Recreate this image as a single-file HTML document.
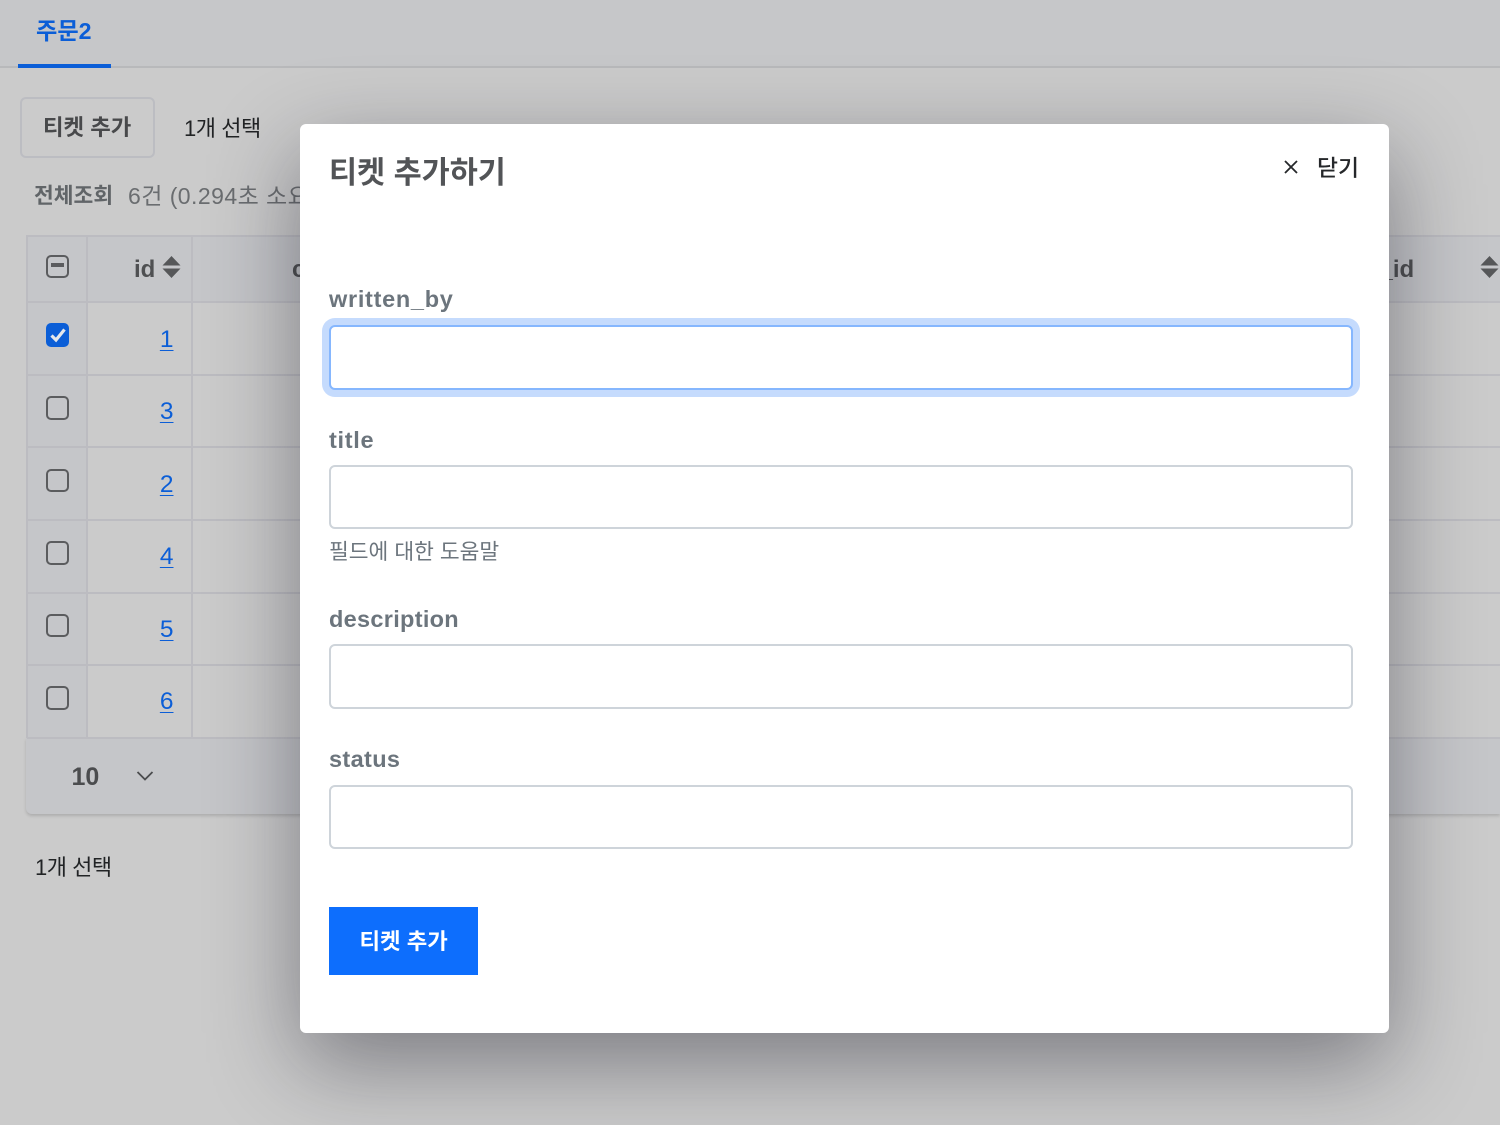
<!DOCTYPE html>
<html lang="ko"><head><meta charset="utf-8"><title>티켓 추가</title>
<style>
*{box-sizing:border-box}
html,body{margin:0;padding:0}
body{width:1500px;height:1125px;overflow:hidden;position:relative;background:#cbcbcb;font-family:"Liberation Sans","Noto Sans CJK KR",sans-serif;color:#212529}
.t{position:absolute;white-space:nowrap;line-height:1}
.r{position:absolute}
.hl{position:absolute;left:27px;width:1473px;height:2px;background:#bcbcc1}
.vl{position:absolute;width:2px;background:#bcbcc1}
.cb{position:absolute;left:45.500px;width:23.500px;height:23.500px;border:2px solid #5b5c5e;border-radius:5px}
.lk{position:absolute;right:1326.500px;font-size:24.500px;line-height:1;color:#0b5ed7;text-decoration:underline;text-underline-offset:3px;text-decoration-thickness:1px}
.lb{position:absolute;left:329px;font-size:23.500px;font-weight:700;color:#6c757d;line-height:1;white-space:nowrap}
.in{position:absolute;left:329px;width:1024px;height:65px;background:#fff;border:2px solid #ced4da;border-radius:6px}
</style></head><body>
<div class="r" style="left:0;top:0;width:1500px;height:68px;background:#c6c7c9;border-bottom:2px solid #b8b9bb"></div>
<div class="r" style="left:18px;top:64px;width:93px;height:4px;background:#0b5ed7"></div>
<div class="t" style="left:36px;top:20px;font-size:23.200px;font-weight:700;color:#0b5ed7">주문2</div>

<div class="r" style="left:20px;top:97px;width:135px;height:61px;border:2px solid #bcbdc2;border-radius:6px"></div>
<div class="t" style="left:43px;top:117px;font-size:22.300px;font-weight:700;color:#48494b">티켓 추가</div>
<div class="t" style="left:184px;top:118px;font-size:22px;letter-spacing:-.45px;color:#212325">1개 선택</div>
<div class="t" style="left:34px;top:186px;font-size:21.500px;font-weight:700;color:#616568">전체조회</div>
<div class="t" style="left:128px;top:185px;font-size:23px;letter-spacing:.45px;color:#6a6d70">6건 (0.294초 소요)</div>

<div class="r" style="left:27px;top:236px;width:1473px;height:66px;background:#c5c6c9"></div>
<div class="r" style="left:27px;top:302px;width:60px;height:436px;background:#c5c6c9"></div>
<div class="r" style="left:26px;top:738px;width:1474px;height:76px;background:#c5c6c9;border-radius:0 0 0 6px;box-shadow:0 2px 3px rgba(0,0,0,.15)"></div>
<div class="hl" style="top:235px"></div><div class="hl" style="top:301px"></div><div class="hl" style="top:374px"></div><div class="hl" style="top:446px"></div><div class="hl" style="top:519px"></div><div class="hl" style="top:592px"></div><div class="hl" style="top:664px"></div><div class="hl" style="top:737px"></div>
<div class="vl" style="left:25.500px;top:235px;height:503px"></div>
<div class="vl" style="left:86px;top:236px;height:502px"></div>
<div class="vl" style="left:191px;top:236px;height:502px"></div>

<div class="cb" style="top:254.500px"><div class="r" style="left:3px;top:6.500px;width:13.500px;height:3.500px;background:#5b5c5e"></div></div>
<div class="cb" style="top:323px;background:#0b5ed7;border-color:#0b5ed7"><svg class="r" style="left:0;top:0" width="20" height="20" viewBox="0 0 20 20"><path d="M3.500 10.500l4.500 4.500 8.500-10.500" fill="none" stroke="#e4e7eb" stroke-width="3.200"/></svg></div>
<div class="cb" style="top:396px"></div><div class="cb" style="top:468.500px"></div><div class="cb" style="top:541px"></div><div class="cb" style="top:613.500px"></div><div class="cb" style="top:686px"></div>

<div class="t" style="left:134px;top:258px;font-size:24px;font-weight:700;color:#4f5052">id</div>
<svg class="r" style="left:162px;top:256px" width="19" height="22" viewBox="0 0 19 22"><path d="M9.500 0L18.500 9.500H.5zM.5 12.500H18.500L9.500 22z" fill="#565759"/></svg>
<div class="t" style="left:292px;top:258px;font-size:24px;font-weight:700;color:#4f5052">c</div>
<div class="t" style="left:1379.500px;top:258px;font-size:24px;font-weight:700;color:#4f5052">_id</div>
<svg class="r" style="left:1479.500px;top:256px" width="19" height="22" viewBox="0 0 19 22"><path d="M9.500 0L18.500 9.500H.5zM.5 12.500H18.500L9.500 22z" fill="#565759"/></svg>

<div class="lk" style="top:327.500px">1</div><div class="lk" style="top:400px">3</div><div class="lk" style="top:472.500px">2</div><div class="lk" style="top:545px">4</div><div class="lk" style="top:617.500px">5</div><div class="lk" style="top:690px">6</div>

<div class="t" style="left:71.500px;top:765px;font-size:25px;font-weight:700;color:#4b4c4e">10</div>
<svg class="r" style="left:136px;top:770px" width="18" height="12" viewBox="0 0 18 12"><path d="M1.500 2L9 9.500 16.500 2" fill="none" stroke="#4b4c4e" stroke-width="1.800"/></svg>
<div class="t" style="left:35px;top:857px;font-size:22px;letter-spacing:-.5px;color:#212325">1개 선택</div>

<div class="r" style="left:300px;top:124px;width:1089px;height:909px;background:#fff;border-radius:6px;box-shadow:0 30px 90px 0 rgba(20,20,35,.44)"></div>
<div class="t" style="left:329px;top:158px;font-size:30.500px;font-weight:700;color:#525457">티켓 추가하기</div>
<svg class="r" style="left:1283px;top:159px" width="16" height="16" viewBox="0 0 16 16"><path d="M2 2L14 14M14 2L2 14" stroke="#25272a" stroke-width="1.800" fill="none"/></svg>
<div class="t" style="left:1317px;top:157px;font-size:22.800px;font-weight:500;color:#25272a">닫기</div>

<div class="lb" style="top:288px;letter-spacing:.7px">written_by</div>
<div class="in" style="top:325px;border-color:#86b7fe;box-shadow:0 0 0 7px #c5dbfd"></div>
<div class="lb" style="top:429px;letter-spacing:.7px">title</div>
<div class="in" style="top:465px;height:64px"></div>
<div class="t" style="left:329px;top:541.500px;font-size:21.500px;color:#6c757d">필드에 대한 도움말</div>
<div class="lb" style="top:607.500px;letter-spacing:.3px">description</div>
<div class="in" style="top:644px"></div>
<div class="lb" style="top:748px;letter-spacing:.35px">status</div>
<div class="in" style="top:785px;height:64px"></div>

<div class="r" style="left:329px;top:907px;width:149px;height:68px;background:#0d6efd"></div>
<div class="t" style="left:359.500px;top:930.500px;font-size:22.300px;font-weight:700;color:#fff">티켓 추가</div>
</body></html>
